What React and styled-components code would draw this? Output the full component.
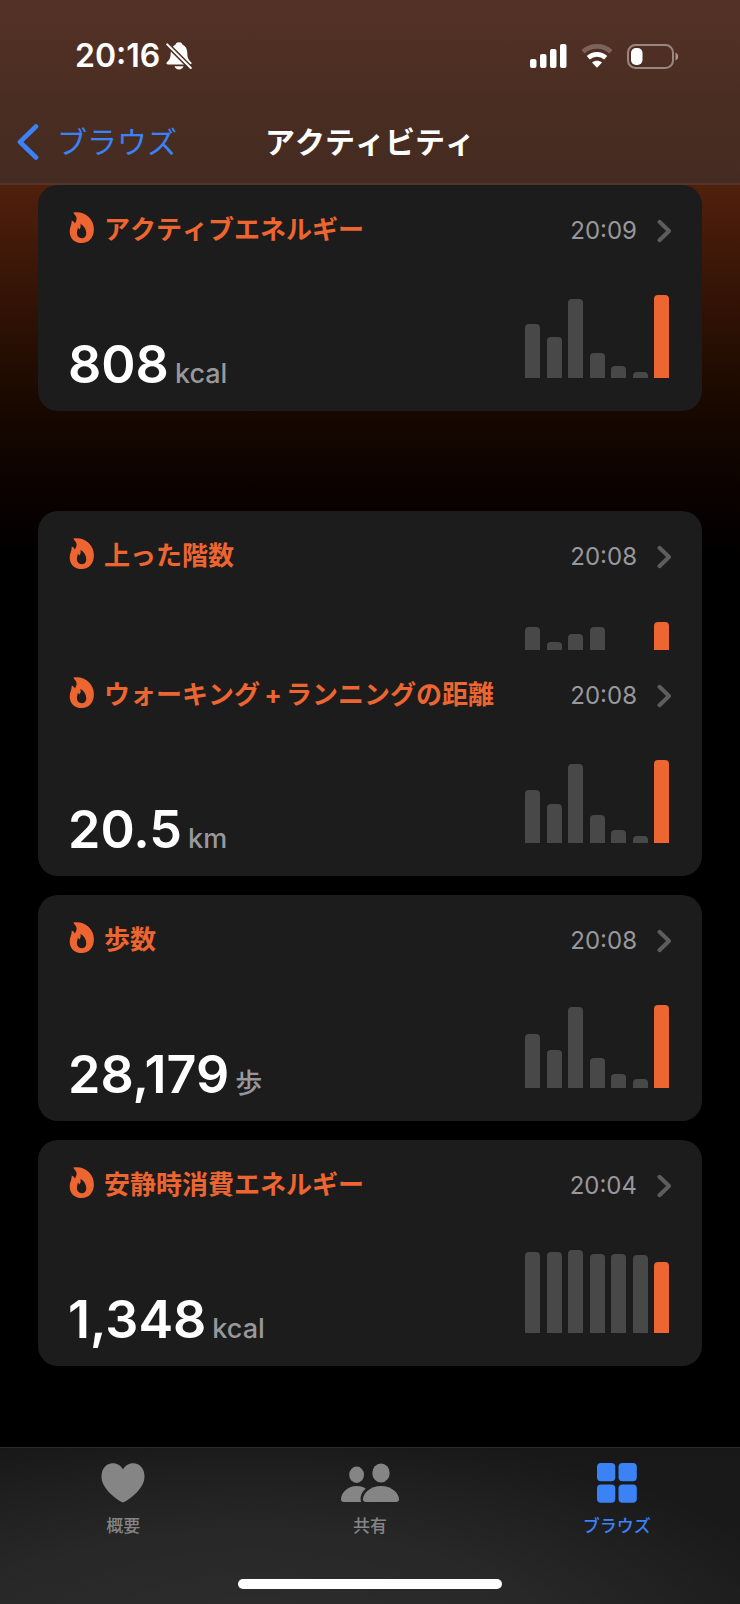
import React from 'react'
import styled, { createGlobalStyle } from 'styled-components'

const orange = '#ed6530'
const blue = '#3b82f7'
const grey = '#98989c'

const GlobalStyle = createGlobalStyle`
  * {
    box-sizing: border-box;
  }

  body {
    margin: 0;
    background: #000;
    color: #fff;
    font-family: Inter, 'Noto Sans CJK JP', sans-serif;
  }

  h1, h2, p {
    margin: 0;
  }

  a {
    color: inherit;
    text-decoration: none;
  }

  svg {
    display: block;
    flex: none;
  }
`

const Page = styled.div`
  min-height: 100vh;
  display: flex;
  flex-direction: column;
  background: linear-gradient(
    to bottom,
    #55220d 0,
    #50200c 185px,
    #331305 300px,
    #170800 411px,
    #080100 510px,
    #000 560px
  );
`

const Header = styled.header`
  border-bottom: 2px solid #533629;
  background: linear-gradient(to bottom, #543126 0%, #4a2d22 55%, #442b21 100%);
`

const StatusBar = styled.div`
  display: flex;
  align-items: center;
  justify-content: space-between;
  height: 98px;
  padding: 35px 61px 21px 75px;
`

const StatusGroup = styled.div`
  display: flex;
  align-items: center;
  gap: ${props => props.$gap}px;
`

const Clock = styled.span`
  font-size: 32px;
  font-weight: 600;
  line-height: 40px;
`

const NavBar = styled.nav`
  display: grid;
  grid-template-columns: 1fr auto 1fr;
  align-items: center;
  height: 85px;
  padding: 2px 16px 0;
`

const BackLink = styled.a`
  display: flex;
  align-items: center;
  gap: 18px;
  color: ${blue};
  font-size: 30px;
  line-height: 44px;
`

const NavTitle = styled.h1`
  font-size: 30px;
  font-weight: 700;
  font-kerning: none;
  line-height: 44px;
`

const Content = styled.main`
  display: flex;
  flex-direction: column;
  gap: 19px;
  padding: 0 38px 80px;
`

const Card = styled.section`
  overflow: hidden;
  border-radius: 20px;
  background: #1c1c1c;
  margin-bottom: ${props => (props.$spaced ? '81px' : '0')};
`

const Item = styled.a`
  display: flex;
  flex-direction: column;
  gap: 45px;
  padding: 26px 30px 11px;
  overflow: hidden;
  height: ${props => (props.$collapsed ? '139px' : 'auto')};
`

const ItemHeader = styled.div`
  display: flex;
  align-items: center;
  height: 38px;
  flex: none;
`

const ItemTitle = styled.h2`
  flex: 1;
  margin-left: 9px;
  color: ${orange};
  font-size: 26px;
  font-weight: 700;
  font-kerning: none;
  line-height: 36px;
`

const Plus = styled.span`
  display: inline-block;
  width: 26px;
  text-align: center;
`

const ItemAside = styled.div`
  display: flex;
  align-items: center;
  gap: 20px;
  padding-top: 2px;
`

const Time = styled.time`
  color: ${grey};
  font-size: 24px;
  line-height: 36px;
`

const ItemBody = styled.div`
  display: flex;
  align-items: flex-end;
  justify-content: space-between;
  flex: none;
`

const Reading = styled.p`
  display: flex;
  align-items: baseline;
  gap: 6px;
  line-height: 52px;
`

const Value = styled.span`
  font-size: 52px;
  font-weight: 600;
`

const Unit = styled.span`
  color: ${grey};
  font-size: 27px;
  font-weight: 500;
`

const Chart = styled.div`
  display: flex;
  align-items: flex-end;
  justify-content: space-between;
  width: 144px;
  height: 84px;
  margin: 0 3px 22px 0;
`

const Bar = styled.div`
  width: 15px;
  border-radius: 4px 4px 0 0;
  background: ${props => (props.$today ? orange : '#484848')};
`

const TabBar = styled.nav`
  display: grid;
  grid-template-columns: repeat(3, 1fr);
  margin-top: auto;
  padding: 15px 0;
  border-top: 1px solid #2b2b2b;
  background: radial-gradient(
      ellipse at 34% 115%,
      rgba(255, 255, 255, 0.08) 0%,
      rgba(255, 255, 255, 0.06) 40%,
      rgba(255, 255, 255, 0) 80%
    ),
    linear-gradient(to bottom, #181818, #1b1b1b);
`

const Tab = styled.a`
  display: flex;
  flex-direction: column;
  align-items: center;
  gap: 11px;
  color: ${props => (props.$active ? blue : '#858585')};
  font-size: 17px;
  font-weight: 500;
  font-kerning: none;
  line-height: 24px;
`

const HomeIndicator = styled.div`
  grid-column: 1 / -1;
  justify-self: center;
  width: 264px;
  height: 10px;
  margin-top: 41px;
  border-radius: 5px;
  background: #fff;
`

const BellOff = () => (
  <svg width="26" height="28" viewBox="0 0 26 28" fill="#fff">
    <mask id="slash">
      <rect width="26" height="28" fill="#fff" />
      <path d="M-1 0.2L27 28.2" stroke="#000" strokeWidth="5" />
    </mask>
    <g mask="url(#slash)">
      <path d="M13 .3c-1.800 0-3 .9-3.400 2.200C6.300 4 4.800 7 4.700 11c-.1 5-1.100 6.600-3.600 9-1.200 1.200-.7 2.500.8 2.500h22.200c1.500 0 2-1.300.8-2.500-2.500-2.400-3.500-4-3.600-9-.1-4-1.600-7-4.900-8.500C16 1.200 14.800.3 13 .3z" />
      <path d="M8.500 24.300h9c-.6 2-2.300 3.200-4.500 3.200s-3.900-1.200-4.500-3.200z" />
    </g>
    <path d="M1.200 2.400L24.800 26" stroke="#fff" strokeWidth="2" strokeLinecap="round" />
  </svg>
)

const Signal = () => (
  <svg width="37" height="24" viewBox="0 0 37 24" fill="#fff">
    <rect x="0" y="15" width="6.500" height="9" rx="2" />
    <rect x="10" y="10" width="6.500" height="14" rx="2" />
    <rect x="20" y="5" width="6.500" height="19" rx="2" />
    <rect x="30" y="0" width="6.500" height="24" rx="2" />
  </svg>
)

const Wifi = () => (
  <svg width="32" height="24" viewBox="0 0 32 24">
    <g fill="none" stroke="#fff" strokeWidth="4.600">
      <path d="M2 7.700C10 .6 22 .6 30 7.700" opacity="0.25" />
      <path d="M7.300 13.800c5-4.600 12.400-4.600 17.400 0" />
    </g>
    <path d="M16 23.800l-5-5.300c2.800-2.500 7.200-2.500 10 0z" fill="#fff" />
  </svg>
)

const Battery = () => (
  <svg width="52" height="25" viewBox="0 0 52 25">
    <rect x="1" y="1" width="45" height="23" rx="7.500" fill="none" stroke="#fff" strokeOpacity="0.42" strokeWidth="2" />
    <rect x="4" y="4" width="11.500" height="17" rx="5" fill="#fff" />
    <path d="M48.500 8.500c3.500 1.200 3.500 6.800 0 8z" fill="#fff" fillOpacity="0.5" />
  </svg>
)

const ChevronLeft = () => (
  <svg width="23" height="38" viewBox="0 0 23 38" fill="none" stroke={blue} strokeWidth="4.600" strokeLinecap="round" strokeLinejoin="round">
    <path d="M20 3.500L4 19l16 15.500" />
  </svg>
)

const ChevronRight = () => (
  <svg width="15" height="24" viewBox="0 0 15 24" fill="none" stroke="#5d5d5f" strokeWidth="4" strokeLinecap="round" strokeLinejoin="round">
    <path d="M2.500 2.800L12 12l-9.500 9.200" />
  </svg>
)

const Flame = () => (
  <svg width="27" height="36" viewBox="-1.500 0 27 36" fill={orange}>
    <path
      fillRule="evenodd"
      d="M3.800.6C14-1.500 24.400 5.800 24.400 17.200c0 8.500-5 13.800-12.200 13.800C5 31 .2 26.300.2 19.400c0-4.600 2.300-6.700 2-11 1.600.6 2.600 1.600 3.200 3 1.800-3.200 2.200-5.200.9-7.300C5.600 3 4.500 2.200 3.800.6zM10.800 11.800c.8 2.500.2 4.200-1 5.700-.3-.8-.8-1.300-1.500-1.700 0 2-.9 3.200-.9 5.300 0 3.300 2 5.200 4.800 5.200s4.600-2 4.600-5c0-4-2.400-7.300-6-9.500z"
    />
  </svg>
)

const Heart = () => (
  <svg width="44" height="40" viewBox="0 0 44 40" fill="currentColor">
    <path d="M22 39.600c-1.500 0-21.500-11.800-21.500-26C.5 5.600 5.400.3 11.800.3c4.600 0 8.100 2.500 10.200 6.200C24.100 2.800 27.600.3 32.200.3c6.400 0 11.300 5.300 11.300 13.300 0 14.200-20 26-21.500 26z" />
  </svg>
)

const People = () => (
  <svg width="58" height="40" viewBox="0 0 58 40" fill="currentColor">
    <ellipse cx="15.600" cy="11.800" rx="7.400" ry="8.200" />
    <path d="M3 39c-2 0-3-1-3-2.800C0 30.500 6 23 15.600 23c4 0 7 1 9.200 2.700-4.100 3.100-6.300 8.300-4.600 13.300z" />
    <ellipse cx="40" cy="10" rx="8.700" ry="9.500" />
    <path d="M25 39c-2 0-3-1-3-2.800C22 30.500 29 23 40 23s18 7.500 18 13.200c0 1.800-1 2.800-3 2.800z" />
  </svg>
)

const Squares = () => (
  <svg width="40" height="40" viewBox="0 0 40 40" fill="currentColor">
    <rect x="0" y="0" width="18.300" height="18.300" rx="4" />
    <rect x="21.500" y="0" width="18.300" height="18.300" rx="4" />
    <rect x="0" y="21.500" width="18.300" height="18.300" rx="4" />
    <rect x="21.500" y="21.500" width="18.300" height="18.300" rx="4" />
  </svg>
)

const distanceTitle = (
  <>
    ウォーキング<Plus>+</Plus>ランニングの距離
  </>
)

// bars: one height per day, the last one is today
const groups = [
  [
    { title: 'アクティブエネルギー', time: '20:09', value: '808', unit: 'kcal', bars: [54, 41, 79, 25, 12, 6, 83] },
  ],
  [
    { title: '上った階数', time: '20:08', collapsed: true, bars: [77, 62, 70, 77, 0, 0, 82] },
    { title: distanceTitle, time: '20:08', value: '20.5', unit: 'km', bars: [53, 39, 79, 28, 13, 7, 83] },
  ],
  [
    { title: '歩数', time: '20:08', value: '28,179', unit: '歩', bars: [54, 38, 81, 30, 14, 9, 83] },
  ],
  [
    { title: '安静時消費エネルギー', time: '20:04', value: '1,348', unit: 'kcal', bars: [81, 81, 83, 79, 79, 78, 71] },
  ],
]

const Metric = ({ title, time, value, unit, bars, collapsed }) => (
  <Item href="#" $collapsed={collapsed}>
    <ItemHeader>
      <Flame />
      <ItemTitle>{title}</ItemTitle>
      <ItemAside>
        <Time>{time}</Time>
        <ChevronRight />
      </ItemAside>
    </ItemHeader>
    <ItemBody>
      <Reading>
        {value && <Value>{value}</Value>}
        {unit && <Unit>{unit}</Unit>}
      </Reading>
      <Chart>
        {bars.map((height, i) => (
          <Bar key={i} $today={i === bars.length - 1} style={{ height }} />
        ))}
      </Chart>
    </ItemBody>
  </Item>
)

const App = () => (
  <Page lang="ja">
    <GlobalStyle />
    <Header>
      <StatusBar>
        <StatusGroup $gap={6}>
          <Clock>20:16</Clock>
          <BellOff />
        </StatusGroup>
        <StatusGroup $gap={14}>
          <Signal />
          <Wifi />
          <Battery />
        </StatusGroup>
      </StatusBar>
      <NavBar>
        <BackLink href="#">
          <ChevronLeft />
          ブラウズ
        </BackLink>
        <NavTitle>アクティビティ</NavTitle>
      </NavBar>
    </Header>
    <Content>
      {groups.map((items, i) => (
        <Card key={i} $spaced={i === 0}>
          {items.map((item, j) => (
            <Metric key={j} {...item} />
          ))}
        </Card>
      ))}
    </Content>
    <TabBar>
      <Tab href="#">
        <Heart />
        概要
      </Tab>
      <Tab href="#">
        <People />
        共有
      </Tab>
      <Tab href="#" $active>
        <Squares />
        ブラウズ
      </Tab>
      <HomeIndicator />
    </TabBar>
  </Page>
)

export default App
